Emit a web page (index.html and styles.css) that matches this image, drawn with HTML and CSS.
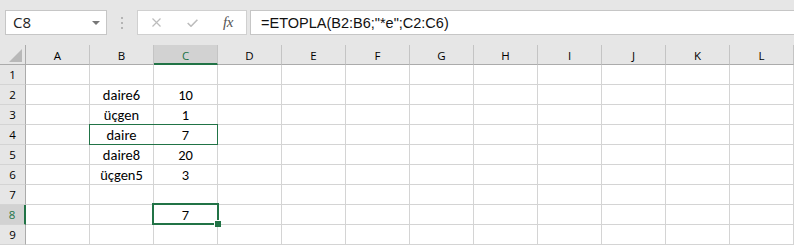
FILE: index.html
```html
<!DOCTYPE html>
<html lang="tr">
<head>
<meta charset="utf-8">
<title>ETOPLA</title>
<link rel="stylesheet" href="styles.css">
</head>
<body>
<div class="app">
  <div class="fbar">
    <div class="namebox">
      <span class="nb-text">C8</span>
      <svg class="nb-arrow" width="8" height="4" viewBox="0 0 8 4"><path d="M0 0H8L4 4Z" fill="#777"/></svg>
    </div>
    <div class="grip"><i></i><i></i><i></i></div>
    <div class="fbtns">
      <svg class="ic-x" width="9" height="9" viewBox="0 0 9 9"><path d="M0.5 0.5L8.5 8.5M8.5 0.5L0.5 8.5" stroke="#bcbcbc" stroke-width="1.2" fill="none"/></svg>
      <svg class="ic-ok" width="11" height="8" viewBox="0 0 11 8"><path d="M0.7 4L4 7.2L10.4 0.7" stroke="#bcbcbc" stroke-width="1.6" fill="none"/></svg>
      <span class="ic-fx">fx</span>
    </div>
    <div class="formula">=ETOPLA(B2:B6;"*e";C2:C6)</div>
  </div>
  <div class="sheet">
    <div class="corner"><svg width="13" height="13" viewBox="0 0 13 13"><path d="M13 0V13H0Z" fill="#b8b8b8"/></svg></div>
    <div class="ch">A</div><div class="ch">B</div><div class="ch sel-h">C</div><div class="ch">D</div><div class="ch">E</div><div class="ch">F</div><div class="ch">G</div><div class="ch">H</div><div class="ch">I</div><div class="ch">J</div><div class="ch">K</div><div class="ch">L</div>

    <div class="rh">1</div><div class="c"></div><div class="c"></div><div class="c"></div><div class="c"></div><div class="c"></div><div class="c"></div><div class="c"></div><div class="c"></div><div class="c"></div><div class="c"></div><div class="c"></div><div class="c"></div>
    <div class="rh">2</div><div class="c"></div><div class="c">daire6</div><div class="c">10</div><div class="c"></div><div class="c"></div><div class="c"></div><div class="c"></div><div class="c"></div><div class="c"></div><div class="c"></div><div class="c"></div><div class="c"></div>
    <div class="rh">3</div><div class="c"></div><div class="c">üçgen</div><div class="c">1</div><div class="c"></div><div class="c"></div><div class="c"></div><div class="c"></div><div class="c"></div><div class="c"></div><div class="c"></div><div class="c"></div><div class="c"></div>
    <div class="rh">4</div><div class="c"></div><div class="c">daire</div><div class="c">7</div><div class="c"></div><div class="c"></div><div class="c"></div><div class="c"></div><div class="c"></div><div class="c"></div><div class="c"></div><div class="c"></div><div class="c"></div>
    <div class="rh">5</div><div class="c"></div><div class="c">daire8</div><div class="c">20</div><div class="c"></div><div class="c"></div><div class="c"></div><div class="c"></div><div class="c"></div><div class="c"></div><div class="c"></div><div class="c"></div><div class="c"></div>
    <div class="rh">6</div><div class="c"></div><div class="c">üçgen5</div><div class="c">3</div><div class="c"></div><div class="c"></div><div class="c"></div><div class="c"></div><div class="c"></div><div class="c"></div><div class="c"></div><div class="c"></div><div class="c"></div>
    <div class="rh">7</div><div class="c"></div><div class="c"></div><div class="c"></div><div class="c"></div><div class="c"></div><div class="c"></div><div class="c"></div><div class="c"></div><div class="c"></div><div class="c"></div><div class="c"></div><div class="c"></div>
    <div class="rh sel-r">8</div><div class="c"></div><div class="c"></div><div class="c">7</div><div class="c"></div><div class="c"></div><div class="c"></div><div class="c"></div><div class="c"></div><div class="c"></div><div class="c"></div><div class="c"></div><div class="c"></div>
    <div class="rh">9</div><div class="c"></div><div class="c"></div><div class="c"></div><div class="c"></div><div class="c"></div><div class="c"></div><div class="c"></div><div class="c"></div><div class="c"></div><div class="c"></div><div class="c"></div><div class="c"></div>

    <div class="range-box"></div>
    <div class="active-box"><span class="handle"></span></div>
  </div>
</div>
</body>
</html>
```

FILE: styles.css
```css
* { box-sizing: border-box; }
html, body { margin: 0; padding: 0; background: #fff; }
.app { width: 794px; height: 245px; overflow: hidden; background: #e6e6e6; }

.fbar { height: 45px; display: flex; align-items: flex-start; padding-top: 10px; padding-left: 5px; }
.namebox { width: 102px; height: 25px; background: #fff; border: 1px solid #c6c6c6; display: flex; align-items: center; justify-content: space-between; padding: 0 6px 0 7px; }
.nb-text { font-family: "Segoe UI", "Open Sans", sans-serif; font-size: 15px; color: #222; line-height: 1; }
.nb-arrow { margin-top: 1px; }
.grip { width: 30px; height: 25px; display: flex; flex-direction: column; align-items: center; justify-content: center; gap: 3px; }
.grip i { display: block; width: 2px; height: 2px; background: #b4b4b4; }
.fbtns { width: 110px; height: 25px; background: #fff; border: 1px solid #d0d0d0; display: flex; align-items: center; padding-left: 14px; }
.ic-x { margin-right: 26px; }
.ic-ok { margin-right: 25px; }
.ic-fx { font-family: "Liberation Serif", "DejaVu Serif", serif; font-style: italic; font-size: 15px; color: #555; letter-spacing: -0.5px; }
.formula { flex: 1; height: 25px; margin-left: 3px; background: #fff; border: 1px solid #c6c6c6; border-right: none; font-family: "Liberation Sans", Arial, sans-serif; font-size: 14.5px; color: #111; display: flex; align-items: center; padding-left: 10px; }

.sheet { position: relative; display: grid; grid-template-columns: 26px repeat(12, 64px); grid-template-rows: repeat(10, 20px); background: #fff; }
.corner { background: #e6e6e6; border-right: 1px solid #ababab; border-bottom: 1px solid #ababab; display: flex; align-items: flex-end; justify-content: flex-end; padding: 0 3px 2px 0; }
.corner svg { display: block; }
.ch { background: #e6e6e6; border-right: 1px solid #c4c4c4; border-bottom: 1px solid #ababab; font-family: "Segoe UI", "Open Sans", sans-serif; font-size: 11.5px; color: #000; display: flex; align-items: center; justify-content: center; padding-top: 1px; }
.ch.sel-h { background: #d2d2d2; border-bottom: 2px solid #217346; color: #217346; padding-top: 2px; }
.rh { background: #e6e6e6; border-right: 1px solid #ababab; border-bottom: 1px solid #d4d4d4; font-family: "Segoe UI", "Open Sans", sans-serif; font-size: 11.5px; color: #000; display: flex; align-items: center; justify-content: center; }
.rh.sel-r { background: #d2d2d2; border-right: 2px solid #217346; color: #217346; }
.c { border-right: 1px solid #d4d4d4; border-bottom: 1px solid #d4d4d4; font-family: "Carlito", "Lato", sans-serif; font-size: 14.5px; color: #000; display: flex; align-items: center; justify-content: center; padding-top: 1px; }

.range-box { position: absolute; grid-column: 3 / 5; grid-row: 5 / 6; top: -1px; left: -1px; right: 0; bottom: 0; border: 1px solid #217346; pointer-events: none; }
.active-box { position: absolute; grid-column: 4 / 5; grid-row: 9 / 10; top: -2px; left: -2px; right: -1px; bottom: 0; border: 2px solid #217346; pointer-events: none; }
.handle { position: absolute; right: -4px; bottom: -4px; width: 6px; height: 6px; background: #217346; border-left: 1px solid #fff; border-top: 1px solid #fff; box-sizing: content-box; }
```
